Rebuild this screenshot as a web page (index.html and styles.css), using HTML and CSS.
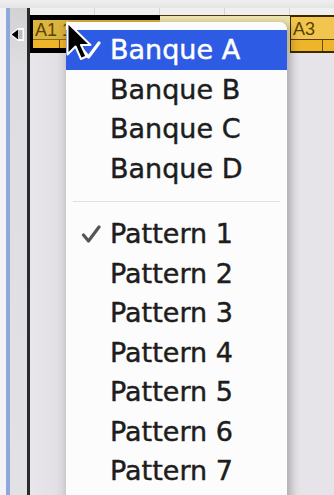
FILE: index.html
```
<!DOCTYPE html>
<html lang="fr">
<head>
<meta charset="utf-8">
<title>Menu Banque / Pattern</title>
<link rel="stylesheet" href="styles.css">
</head>
<body>
<div class="screen">
  <div class="topbar"></div>
  <div class="main">
    <div class="edge"></div>
    <div class="blueline"></div>
    <div class="gutter">
      <svg class="arrow" width="14" height="15" viewBox="0 0 14 15">
        <path d="M0 7.5 L8 1 L14 1 L14 14 L8 14 Z" fill="#fff"/>
        <rect x="9" y="3" width="3.5" height="9" fill="#bdbdbd"/>
        <path d="M1.6 7.5 L8.2 2.5 L8.2 12.5 Z" fill="#000"/>
      </svg>
    </div>
    <div class="divider"></div>
    <div class="tracks">
      <div class="ruler"></div>
      <div class="lane">
        <div class="clip a1">
          <div class="clip-head"><span class="clip-name">A1 1</span></div>
          <div class="clip-cells"><i></i><i></i><i></i><i></i></div>
        </div>
        <div class="clip a2"></div>
        <div class="clip a3">
          <div class="clip-head"><span class="clip-name">A3</span></div>
          <div class="clip-cells"><i></i><i></i></div>
        </div>
      </div>
      <div class="area"></div>
    </div>
  </div>

  <div class="menu">
    <div class="item active">
      <span class="mark"><svg width="20" height="18" viewBox="0 0 20 18"><path d="M2.5 10 L7.5 16 L18 2" fill="none" stroke="#fff" stroke-width="3.2" stroke-linecap="round" stroke-linejoin="round"/></svg></span>
      <span class="label">Banque A</span>
    </div>
    <div class="item"><span class="mark"></span><span class="label">Banque B</span></div>
    <div class="item"><span class="mark"></span><span class="label">Banque C</span></div>
    <div class="item"><span class="mark"></span><span class="label">Banque D</span></div>
    <div class="sep"></div>
    <div class="item">
      <span class="mark"><svg width="20" height="18" viewBox="0 0 20 18"><path d="M2.5 10 L7.5 16 L18 2" fill="none" stroke="#555" stroke-width="3.2" stroke-linecap="round" stroke-linejoin="round"/></svg></span>
      <span class="label">Pattern 1</span>
    </div>
    <div class="item"><span class="mark"></span><span class="label">Pattern 2</span></div>
    <div class="item"><span class="mark"></span><span class="label">Pattern 3</span></div>
    <div class="item"><span class="mark"></span><span class="label">Pattern 4</span></div>
    <div class="item"><span class="mark"></span><span class="label">Pattern 5</span></div>
    <div class="item"><span class="mark"></span><span class="label">Pattern 6</span></div>
    <div class="item"><span class="mark"></span><span class="label">Pattern 7</span></div>
  </div>

  <svg class="cursor" width="28" height="42" viewBox="0 0 28 42">
    <path d="M1.5 1.5 L1.5 33.5 L9.5 25.5 L15 38 L20.5 35.5 L15 24 L24.5 24 Z" fill="#000" stroke="#fff" stroke-width="2" stroke-linejoin="round"/>
  </svg>
</div>
</body>
</html>
```

FILE: styles.css
```
html, body {
  margin: 0;
  padding: 0;
}

body {
  width: 334px;
  height: 495px;
  overflow: hidden;
  background: #e6e4e8;
}

.screen {
  position: relative;
  width: 334px;
  height: 495px;
  overflow: hidden;
  display: flex;
  flex-direction: column;
  font-family: "DejaVu Sans", Verdana, sans-serif;
}

.topbar {
  height: 8px;
  flex: none;
  background: linear-gradient(#efefef, #e4e4e4);
}

.main {
  flex: 1;
  display: flex;
  min-height: 0;
}

.edge {
  flex: none;
  width: 6px;
  background: #f3f3f5;
}

.blueline {
  flex: none;
  width: 4px;
  background: #8ea9d9;
}

.gutter {
  flex: none;
  width: 17px;
  background: linear-gradient(#d2d2d4, #dedde1 60px, #e2e1e5);
  display: flex;
  flex-direction: column;
}

.arrow {
  margin-top: 19px;
  display: block;
}

.divider {
  flex: none;
  width: 3px;
  background: #2a2a2a;
}

.tracks {
  flex: 1;
  min-width: 0;
  display: flex;
  flex-direction: column;
  overflow: hidden;
}

.ruler {
  flex: none;
  height: 7px;
  background-color: #f0f0f0;
  background-image: repeating-linear-gradient(90deg, transparent 0 64px, #d6d6d6 64px 65px);
}

.lane {
  flex: none;
  height: 38px;
  display: flex;
}

.clip {
  box-sizing: border-box;
  display: flex;
  flex-direction: column;
  flex: none;
  overflow: hidden;
}

.clip-head {
  flex: 1;
  display: flex;
  align-items: center;
  padding-left: 3px;
}

.clip-name {
  font-family: "Liberation Sans", Arial, sans-serif;
  font-size: 18px;
  color: #5a4300;
  line-height: 1;
  white-space: nowrap;
}

.clip-cells {
  display: flex;
}

.clip-cells i {
  display: block;
  flex: none;
  box-sizing: border-box;
  border-right: 1px solid #6b4c05;
}

.a1 {
  width: 130px;
  border-top: 5px solid #000;
  border-left: 3px solid #000;
  border-bottom: 5px solid #000;
  background: #dcb440;
}

.a1 .clip-head {
  padding-left: 2px;
}

.a1 .clip-cells {
  height: 8px;
  background: #efb62a;
  border-top: 1px solid #8a6a10;
}

.a1 .clip-cells i {
  width: 27px;
}

.a2 {
  width: 130px;
  border-top: 1px solid #4a3a10;
  background: #efe4ae;
}

.a3 {
  flex: 1;
  min-width: 0;
  border-top: 2px solid #3a2a00;
  border-left: 1px solid #3a2a00;
  border-bottom: 2px solid #3a2a00;
  background: #f2c64e;
}

.a3 .clip-head {
  padding-left: 2px;
  padding-top: 1px;
}

.a3 .clip-cells {
  height: 11px;
  background: #efb52a;
  border-top: 1px solid #5a4000;
}

.a3 .clip-cells i {
  width: 32px;
}

.area {
  flex: 1;
  background: linear-gradient(90deg, #e8e6ea 0, #e3e1e5 24px, #e6e4e8 40px);
}

.menu {
  position: absolute;
  left: 66px;
  top: 22px;
  width: 221px;
  height: 490px;
  box-sizing: border-box;
  padding-top: 8px;
  background: #fcfcfc;
  border-radius: 2px 7px 0 0;
  box-shadow: 5px 2px 9px rgba(0, 0, 0, 0.22), -3px 2px 8px rgba(0, 0, 0, 0.12);
}

.item {
  height: 39.5px;
  display: flex;
  align-items: flex-start;
  font-size: 27px;
  line-height: 39.5px;
  color: #1d1d1d;
  white-space: nowrap;
  -webkit-text-stroke: 0.45px currentColor;
}

.item.active {
  background: #2d5be4;
  color: #fff;
}

.mark {
  width: 44px;
  flex: none;
  box-sizing: border-box;
  padding-left: 15px;
  padding-top: 11px;
  display: flex;
}

.mark svg {
  display: block;
}

.sep {
  height: 26px;
  display: flex;
  align-items: center;
  padding: 0 7px;
}

.sep::after {
  content: "";
  flex: 1;
  height: 1px;
  background: #e0e0e0;
}

.cursor {
  position: absolute;
  left: 66px;
  top: 21px;
}
```
